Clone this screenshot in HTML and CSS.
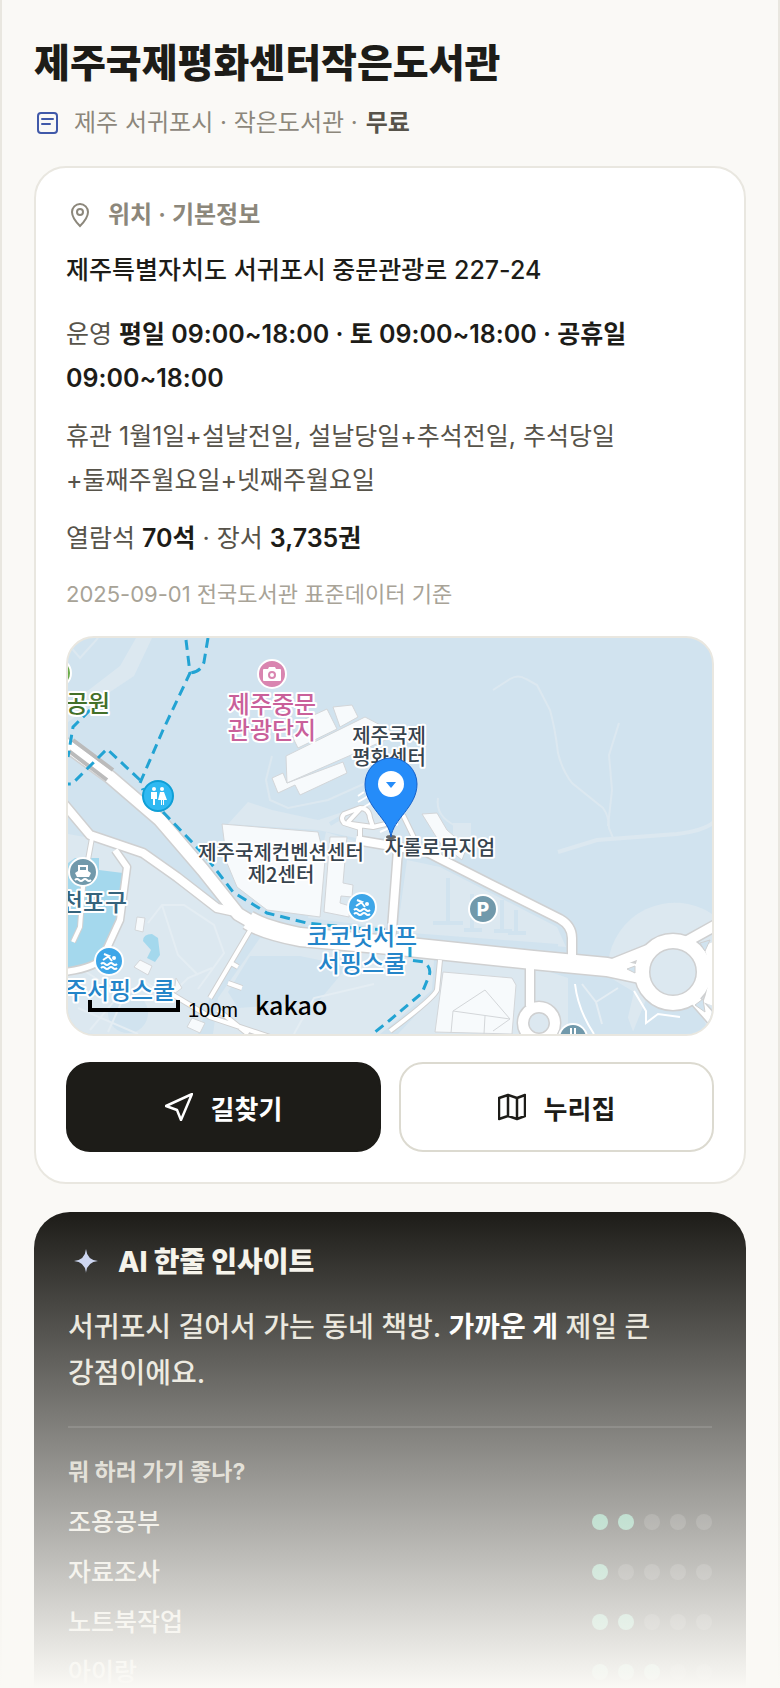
FILE: index.html
```html
<!DOCTYPE html>
<html lang="ko">
<head>
	<meta charset="UTF-8">
	<meta name="viewport" content="width=device-width, initial-scale=1">
	<title>제주국제평화센터작은도서관</title>
	<link rel="stylesheet" href="styles.css">
</head>
<body>
	<main class="page">
		<header class="head">
			<h1>제주국제평화센터작은도서관</h1>
			<p class="sub">
				<svg class="ico_doc" viewBox="0 0 26 26" aria-hidden="true"><rect x="4" y="3" width="19" height="20" rx="3"/><path d="M8 9h11M8 14h8"/></svg>
				<span>제주 서귀포시 · 작은도서관 ·</span>
				<b>무료</b>
			</p>
		</header>

		<section class="card">
			<h2 class="card_title">
				<svg class="ico_pin" viewBox="0 0 28 28" aria-hidden="true"><path d="M14 25C9 20 6 16 6 11a8 8 0 0 1 16 0C22 16 19 20 14 25z"/><circle cx="14" cy="11" r="3"/></svg>
				위치 · 기본정보
			</h2>
			<p class="addr">제주특별자치도 서귀포시 중문관광로 227-24</p>
			<p class="info">운영 <b>평일 09:00~18:00 · 토 09:00~18:00 · 공휴일 09:00~18:00</b></p>
			<p class="info">휴관 1월1일+설날전일, 설날당일+추석전일, 추석당일<wbr>+둘째주월요일+넷째주월요일</p>
			<p class="info">열람석 <b>70석</b> · 장서 <b>3,735권</b></p>
			<p class="base">2025-09-01 전국도서관 표준데이터 기준</p>

			<svg class="map" viewBox="0 0 644 396" preserveAspectRatio="xMidYMid slice" role="img" aria-label="지도">
				<!-- 땅 -->
				<g class="land">
					<path d="M68 0L52 28 0 68V84L30 62 66 38 84 0z"/>
					<path d="M0 196L22 200 75 220 109 246 165 280 184 292 142 359 130 396H0z"/>
					<path d="M192 300L322 314 366 322 364 352 322 388 312 396H145L150 360z"/>
					<path d="M339 222L372 229 489 289 498 309 329 295z"/>
					<path d="M258 194L292 205 329 213 322 290 240 280z"/>
					<path d="M180 164L204 172 250 182 300 166 316 150 322 200 288 200 250 192 160 186z"/>
					<path d="M372 322L462 330 482 334 500 340 500 396H330L368 356z"/>
					<path d="M540 326A67 67 0 0 1 644 276V396H566z"/>
					<path d="M385 185h18v24h-18z"/>
				</g>
				<path class="ground" d="M182 318l50 0 48 10-30 36-80 6-10-16z"/>
				<path class="ground" d="M500 340l46 2 20 12-10 42h-44zM582 352l26 16 22 0 12 28h-78z"/>
				<circle class="ground" cx="60" cy="375" r="20"/>
				<g class="trail">
					<path d="M425 52L442 41Q450 36 458 41L469 47 482 72Q487 90 490 115 494 132 504 145L535 170Q541 178 541 190L545 200"/>
					<path d="M551 85L541 117 544 152 540 188"/>
					<path d="M370 160Q367 178 388 188"/>
					<path d="M204 118l-6 24 4 20 18 8 40-8 40-18"/>
					<path d="M0 6l12 14L30 0"/>
				</g>
				<g class="trail lane">
					<path d="M80 285l14-18 22 0 30 20 10 28-26 36M94 267l16 50 20 20M72 340l28 20 20-20 24-10"/>
					<path d="M514 346l14 18 22-14M528 364l6 22M226 396l20-36 60-14"/>
					<path d="M12 330l40 26-30 36M60 350l-20 44M10 370l60 26"/>
				</g>
				<path class="trail wide" d="M490 214L529 202 609 196Q636 193 646 184"/>
				<path class="lot" d="M380 240v46M365 285h30M404 256v36M396 292h18M434 262v32M426 293h18M448 272v24M440 295h18M330 296l160 12"/>
				<path class="lot" d="M250 180l16-8M262 186l40-24M300 150l-20 14"/>
				<path class="water" d="M0 225l7-5h24v12l24 3-4 47-21 47-30 2z"/>
				<path class="water" d="M75 303Q75 296 84 296L90 300 92 317 87 324 79 320 83 312z"/>

				<!-- 건물 -->
				<g class="bldg">
					<path d="M225 100L237 81 259 71 269 91 230 110z"/>
					<path d="M265 69L284 67 290 79 272 89z"/>
					<path d="M204 140L215 135 219 145 275 124 279 135 232 157 227 147 210 155z"/>
					<path d="M218 118L297 79 322 92 322 100 219 145z"/>
					<path d="M154 186L250 194 257 222 252 279 199 272 169 249 159 225z"/>
					<path d="M262 199H279L275 245 285 247 284 259 273 258 272 265 282 268 281 279 256 274z"/>
					<path d="M354 176L369 175 379 192 399 209 394 222 372 205z"/>
					<path d="M375 334L444 340 448 347 444 396 367 394z"/>
					<path d="M385 373L417 352 442 381zM385 373l-2 22M417 378l-1 18M442 381l-17 12"/>
					<path d="M69 279l8 1-2 14-8-2zM72 322l12 6-4 9-14-8zM108 340l6 10-8 6zM124 380l13 5-5 10-13-6z"/>
				</g>

				<!-- 도로 테두리 -->
				<g class="road edge">
					<path class="w4" d="M24 200L15 249 12 289 5 304M184 289L142 360M102 355L142 379 202 399M150 372L180 396M160 345l14 5M163 325l7 4"/>
					<path class="w6" d="M47 212L59 229 52 282 35 319Q28 330 -4 334"/>
					<path class="w8" d="M-4 166L22 197 75 215 109 239 149 270 172 275"/>
					<path class="w8" d="M288 202L359 214 422 246 492 281Q504 288 504 300V320M330 212L323 305M462 325V368"/>
					<path class="w4" d="M292 204V190L276 185Q272 180 276 176L292 170Q301 170 302 180L305 189 276 185M305 189L322 185M335 177L352 212M280 184L293 170M372 322L369 352Q366 360 322 393"/>
					<path class="w12" d="M-6 104L42 139 92 182 135 232 170 276 192 289"/>
					<path class="w18" d="M180 282Q196 292 232 299L322 307 465 322 539 329 572 336"/>
					<path class="w10" d="M545 326L580 312M614 306L650 286M627 362L650 388M640 306Q652 334 640 366"/>
					<circle class="w14" cx="605" cy="334" r="31"/>
					<circle class="w10" cx="471" cy="385" r="16"/>
				</g>
				<g class="road">
					<path class="w4" d="M24 200L15 249 12 289 5 304M184 289L142 360M102 355L142 379 202 399M150 372L180 396M160 345l14 5M163 325l7 4"/>
					<path class="w6" d="M47 212L59 229 52 282 35 319Q28 330 -4 334"/>
					<path class="w8" d="M-4 166L22 197 75 215 109 239 149 270 172 275"/>
					<path class="w8" d="M288 202L359 214 422 246 492 281Q504 288 504 300V320M330 212L323 305M462 325V368"/>
					<path class="w4" d="M292 204V190L276 185Q272 180 276 176L292 170Q301 170 302 180L305 189 276 185M305 189L322 185M335 177L352 212M280 184L293 170M372 322L369 352Q366 360 322 393"/>
					<path class="w12" d="M-6 104L42 139 92 182 135 232 170 276 192 289"/>
					<path class="w18" d="M180 282Q196 292 232 299L322 307 465 322 539 329 572 336"/>
					<path class="w10" d="M545 326L580 312M614 306L650 286M627 362L650 388M640 306Q652 334 640 366"/>
					<circle class="w14" cx="605" cy="334" r="31"/>
					<circle class="w10" cx="471" cy="385" r="16"/>
				</g>
				<path class="isle" d="M559 331l8-3v7zM632 305l10-3-5 11zM627 367l8-6 2 13z"/>
				<path class="bridge" d="M5 102L45 132M1 113L39 142"/>
				<path class="walk" d="M507 346Q510 372 526 396M566 353l12 20v12l12-9 22 3M290 158l6-4M290 164l14-8M294 170l14-8M312 194l18-8"/>

				<!-- 산책로 -->
				<g class="dash">
					<path d="M118 2L122 35 95 92 72 145 75 152"/>
					<path d="M140 0L136 24Q133 34 122 35"/>
					<path d="M72 142L39 111 4 146H-2"/>
					<path d="M22 72L5 89 0 119"/>
					<path d="M95 174L122 202 139 220 165 254 199 275 239 285 285 290 322 292"/>
					<path d="M342 309V322L356 324Q364 330 361 338L354 355 322 382 302 398"/>
				</g>

				<!-- 장소 표시 -->
				<circle class="spot green" cx="-11" cy="35" r="14"/>
				<g transform="translate(204 36)">
					<circle class="spot pink" r="14"/>
					<path fill="#fff" d="M-8-5h4l1-2h6l1 2h4q1 0 1 1V6q0 1-1 1H-8q-1 0-1-1V-4q0-1 1-1z"/>
					<circle class="lens" cy="1" r="3"/>
				</g>
				<g transform="translate(90 158)">
					<circle class="toilet" r="15"/>
					<path fill="#fff" d="M-7-4h6v7h-2v6h-2V3h-2zM2-4h4l3 8H6v5H5V4H4v5H3V4H0z"/>
					<circle fill="#fff" cx="-4" cy="-7" r="2"/><circle fill="#fff" cx="4" cy="-7" r="2"/>
				</g>
				<g transform="translate(15 234)">
					<circle class="spot slate" r="14"/>
					<path fill="#fff" d="M-5-7H5V-1L8 1 6 5H-6L-8 1-5-1z"/>
					<path fill="#7199ab" d="M-3-5h6v3h-6z"/>
					<path class="wave" d="M-8 8q2-2 4 0 2 2 4 0 2-2 4 0 2 2 4 0"/>
				</g>
				<g id="swim" transform="translate(41 323)">
					<circle class="spot blue" r="14"/>
					<circle fill="#fff" cx="5" cy="-3" r="2"/>
					<path class="wave" d="M-5-7L0-5-6-1M-1-5L3 0M-8 3q2-2 4 0 2 2 4 0 2-2 4 0 2 2 4 0M-8 7q2-2 4 0 2 2 4 0 2-2 4 0 2 2 4 0"/>
				</g>
				<use href="#swim" x="253" y="-54"/>
				<circle class="spot slate" cx="415" cy="271" r="14"/>
				<text class="parking" x="415" y="278">P</text>
				<circle class="spot slate" cx="505" cy="400" r="14"/>
				<path class="wave" d="M503 390v8M507 390v8"/>

				<g class="label">
					<text class="park" x="20" y="74">공원</text>
					<text class="tour" x="204" y="75">제주중문</text>
					<text class="tour" x="204" y="101">관광단지</text>
					<text x="321" y="105">제주국제</text>
					<text x="321" y="127">평화센터</text>
					<text x="213" y="222">제주국제컨벤션센터</text>
					<text x="213" y="244">제2센터</text>
					<text x="372" y="217">자롤로뮤지엄</text>
					<text class="port" x="26" y="273">천포구</text>
					<text class="surf" x="52" y="361">주서핑스쿨</text>
					<text class="surf" x="294" y="307">코코넛서프</text>
					<text class="surf" x="294" y="334">서핑스쿨</text>
				</g>

				<ellipse cx="323" cy="199" rx="5" ry="2" fill="#666"/>
				<path class="marker" d="M323 199C321 181 297 169 297 146a26 26 0 0 1 52 0C349 169 325 181 323 199z"/>
				<circle cx="323" cy="146" r="13" fill="#fff"/>
				<path fill="#258cf9" d="M318 144h10l-5 6z"/>

				<path class="scale" d="M22 362v10h88v-10"/>
				<text class="meter" x="120" y="379">100m</text>
				<text class="kakao" x="187" y="377">kakao</text>
			</svg>

			<div class="btns">
				<button class="btn dark" type="button">
					<svg viewBox="0 0 28 28" aria-hidden="true"><path d="M27 1L1 13l11 4 4 10z"/></svg>
					길찾기
				</button>
				<button class="btn" type="button">
					<svg viewBox="0 0 28 28" aria-hidden="true"><path d="M1 5l9-3 9 3 8-3v21l-8 3-9-3-9 3zM10 2v21M19 5v21"/></svg>
					누리집
				</button>
			</div>
		</section>

		<div class="preview">
			<section class="insight">
				<h2>
					<svg viewBox="0 0 34 34" aria-hidden="true"><path d="M18 4Q19 15 30 16 19 17 18 28 17 17 6 16 17 15 18 4z"/></svg>
					AI 한줄 인사이트
				</h2>
				<p class="say">서귀포시 걸어서 가는 동네 책방. <b>가까운 게</b> 제일 큰 강점이에요.</p>
				<h3>뭐 하러 가기 좋나?</h3>
				<ul>
					<li>조용공부 <span class="dots"><i class="on"></i><i class="on"></i><i></i><i></i><i></i></span></li>
					<li>자료조사 <span class="dots"><i class="on"></i><i></i><i></i><i></i><i></i></span></li>
					<li>노트북작업 <span class="dots"><i class="on"></i><i class="on"></i><i></i><i></i><i></i></span></li>
					<li>아이랑 <span class="dots"><i class="on"></i><i class="on"></i><i class="on"></i><i></i><i></i></span></li>
				</ul>
			</section>
		</div>
	</main>
</body>
</html>
```

FILE: styles.css
```css
*{
	margin:0;
	padding:0;
	box-sizing:border-box;
}
body{
	background:#faf9f6;
	color:#1d1c18;
	font-family:"Inter","Noto Sans CJK KR",sans-serif;
	font-size:25px;
	word-break:keep-all;
}
.page{
	min-height:100vh;
	border:solid #e9e7e0;
	border-width:0 2px;
}
.head{
	padding:36px 32px 0;
}
h1{
	font-size:39px;
	line-height:54px;
	font-weight:800;
}
.sub{
	display:flex;
	align-items:center;
	margin:16px 0 26px;
	font-size:24px;
	line-height:34px;
	color:#8c877b;
}
.sub b{
	margin-left:8px;
	font-weight:600;
	color:#57534a;
}
svg{
	flex:none;
}
.ico_doc{
	width:26px;
	height:26px;
	margin-right:14px;
	fill:none;
	stroke:#4059a9;
	stroke-width:2;
	stroke-linecap:round;
}
.card{
	margin:0 32px;
	padding:30px;
	background:#fff;
	border:2px solid #e9e7e0;
	border-radius:32px;
}
.card_title{
	display:flex;
	align-items:center;
	gap:14px;
	font-size:24px;
	line-height:34px;
	font-weight:600;
	color:#8c877b;
}
.ico_pin{
	width:28px;
	height:28px;
	fill:none;
	stroke:#8c877b;
	stroke-width:2;
}
.addr{
	margin-top:16px;
	line-height:44px;
	font-weight:500;
}
.info{
	margin-top:14px;
	line-height:44px;
	color:#57534a;
}
.addr + .info{
	margin-top:20px;
}
.info b{
	font-weight:600;
	color:#1d1c18;
}
.base{
	margin-top:14px;
	font-size:22px;
	line-height:40px;
	color:#a8a397;
}

/* 지도 */
.map{
	display:block;
	width:100%;
	height:400px;
	margin-top:22px;
	border:2px solid #e9e7e0;
	border-radius:28px;
	background:#d1e3ef;
}
.land{
	fill:#dce8f0;
}
.ground{
	fill:#d1e3ef;
}
.trail{
	fill:none;
	stroke:#dce8f0;
	stroke-width:2;
}
.lane{
	stroke:#e4edf3;
}
.wide{
	stroke-width:4;
}
.lot{
	fill:none;
	stroke:#d1e3ef;
	stroke-width:4;
}
.water{
	fill:#a4d8ed;
}
.bldg{
	fill:#f7fafc;
	stroke:#d3d6d9;
}
.road{
	fill:none;
	stroke:#fff;
	stroke-linejoin:round;
}
.edge{
	stroke:#cfd0d1;
}
.w4{stroke-width:4;}
.w6{stroke-width:6;}
.w8{stroke-width:8;}
.w10{stroke-width:10;}
.w12{stroke-width:12;}
.w14{stroke-width:14;}
.w18{stroke-width:18;}
.edge .w4{stroke-width:6;}
.edge .w6{stroke-width:9;}
.edge .w8{stroke-width:11;}
.edge .w10{stroke-width:13;}
.edge .w12{stroke-width:15;}
.edge .w14{stroke-width:17;}
.edge .w18{stroke-width:21;}
.isle{
	fill:#d1e3ef;
	stroke:#cfd0d1;
}
.bridge{
	fill:none;
	stroke:#bbb;
	stroke-width:4;
}
.walk{
	fill:none;
	stroke:#fff;
	stroke-width:2;
}
.dash{
	fill:none;
	stroke:#22a3d3;
	stroke-width:3;
	stroke-dasharray:10 6;
}
.spot{
	stroke:#fff;
	stroke-width:2;
}
.green{fill:#6aac4a;}
.pink{fill:#d985b0;}
.slate{fill:#7199ab;}
.blue{fill:#3da6e8;}
.lens{
	fill:none;
	stroke:#d985b0;
	stroke-width:2;
}
.toilet{
	fill:#2fb9f2;
	stroke:#0f9fd6;
	stroke-width:2;
}
.wave{
	fill:none;
	stroke:#fff;
	stroke-width:2;
}
.parking{
	font-size:19px;
	font-weight:800;
	text-anchor:middle;
	fill:#fff;
}
.label{
	font-family:"Noto Sans CJK KR",sans-serif;
	font-size:20px;
	font-weight:500;
	text-anchor:middle;
	fill:#37434d;
	stroke:#fff;
	stroke-width:4;
	stroke-linejoin:round;
	paint-order:stroke;
}
.park{
	font-size:24px;
	fill:#437029;
}
.tour{
	font-size:24px;
	fill:#c9609a;
}
.port{
	font-size:24px;
	fill:#35647d;
}
.surf{
	font-size:24px;
	fill:#2485c9;
}
.marker{
	fill:#258cf9;
	stroke:#1561c9;
}
.scale{
	fill:none;
	stroke:#000;
	stroke-width:4;
}
.meter{
	font-family:"Liberation Sans",sans-serif;
	font-size:20px;
}
.kakao{
	font-family:"Noto Sans CJK KR",sans-serif;
	font-size:25px;
	font-weight:500;
}

.btns{
	display:flex;
	gap:18px;
	margin-top:26px;
}
.btn{
	flex:1;
	display:flex;
	align-items:center;
	justify-content:center;
	gap:18px;
	height:90px;
	border:2px solid #dcdad0;
	border-radius:24px;
	background:#fff;
	color:#1d1c18;
	font-family:inherit;
	font-size:26px;
	font-weight:700;
	cursor:pointer;
}
.btn svg{
	width:28px;
	height:28px;
	fill:none;
	stroke:currentColor;
	stroke-width:2.5;
	stroke-linejoin:round;
}
.dark{
	background:#1d1c18;
	border-color:#1d1c18;
	color:#fff;
}

/* AI 인사이트 미리보기, 아래로 갈수록 흐려짐 */
.preview{
	position:relative;
	margin-top:28px;
	padding:0 32px;
}
.preview::after{
	content:"";
	position:absolute;
	inset:0 -2px;
	background:linear-gradient(rgba(250,249,245,0),#faf9f5);
}
.insight{
	padding:30px 34px 2px;
	background:#1d1c18;
	border-radius:36px 36px 0 0;
	color:#e6e3d8;
}
.insight h2{
	display:flex;
	align-items:center;
	gap:16px;
	font-size:28px;
	line-height:40px;
	font-weight:800;
	color:#f5f3ea;
}
.insight h2 svg{
	width:34px;
	height:34px;
	fill:#c8d2f0;
}
.say{
	margin-top:22px;
	padding-bottom:30px;
	border-bottom:2px solid rgba(255,255,255,.12);
	font-size:28px;
	line-height:46px;
	font-weight:500;
}
.say b{
	font-weight:700;
	color:#fff;
}
.insight h3{
	margin:28px 0 20px;
	font-size:23px;
	line-height:32px;
	font-weight:700;
	color:#c9c5b8;
}
ul{
	display:grid;
	gap:22px;
	list-style:none;
}
li{
	display:flex;
	align-items:center;
	justify-content:space-between;
	line-height:28px;
	font-weight:500;
}
.dots{
	display:flex;
	gap:10px;
}
.dots i{
	width:16px;
	height:16px;
	border-radius:50%;
	background:rgba(255,255,255,.15);
}
.dots .on{
	background:#5fb593;
}
```
